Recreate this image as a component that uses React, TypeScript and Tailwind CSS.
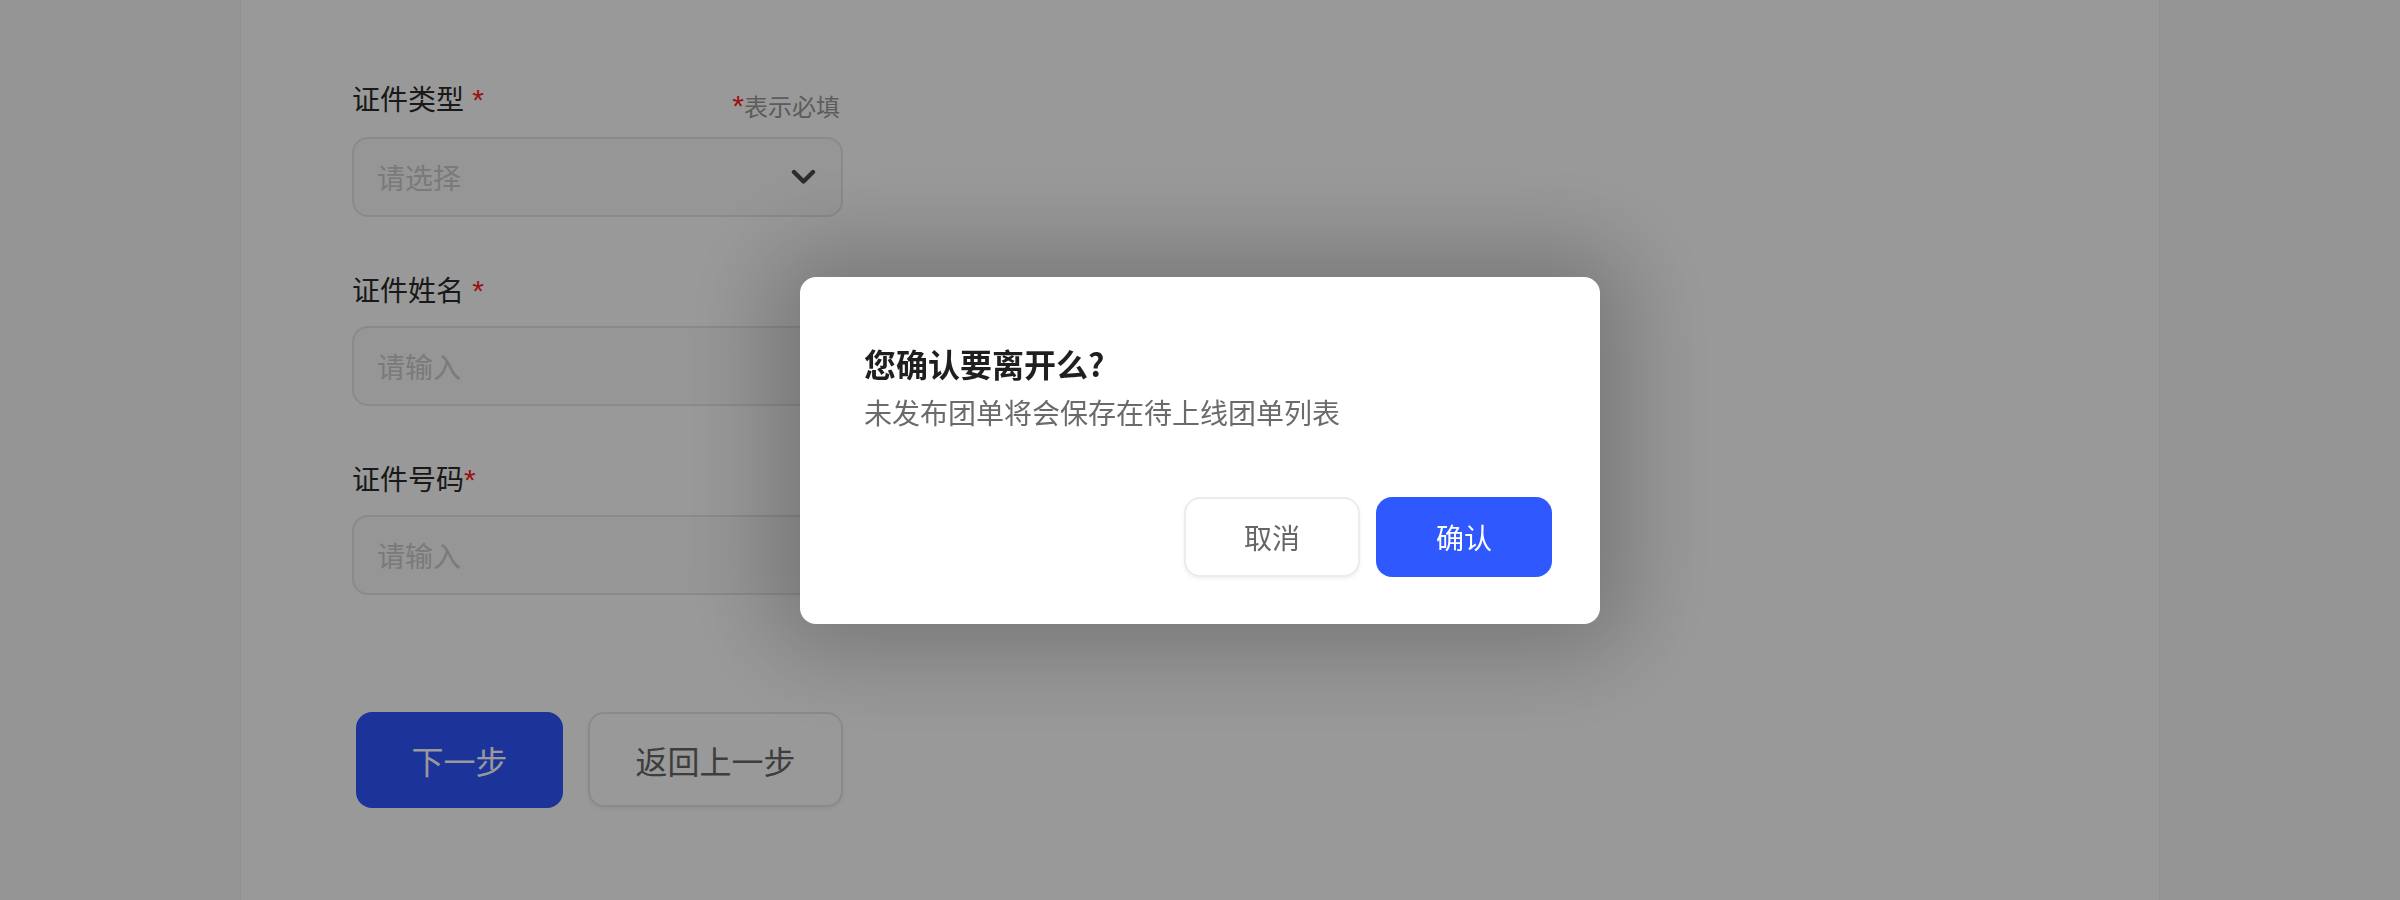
import { useState } from 'react';

const fields = [
  { label: '证件类型', star: ' *', kind: 'select', placeholder: '请选择' },
  { label: '证件姓名', star: ' *', kind: 'input', placeholder: '请输入' },
  { label: '证件号码', star: '*', kind: 'input', placeholder: '请输入' },
];

function ChevronDown() {
  return (
    <svg width="25" height="16" viewBox="0 0 25 16" fill="none">
      <polyline
        points="3,3 12.5,12.5 22,3"
        stroke="#4a4a4a"
        strokeWidth="4.4"
        strokeLinecap="round"
        strokeLinejoin="round"
      />
    </svg>
  );
}

function Star({ text }: { text: string }) {
  return (
    <span
      className="text-[30px] text-[#ff2020]"
      style={{ fontFamily: '"Liberation Sans", sans-serif' }}
    >
      {text}
    </span>
  );
}

export default function App() {
  const [open, setOpen] = useState(true);

  return (
    <div
      className="relative min-h-[900px] bg-[#f8f8f8]"
      style={{ fontFamily: '"Noto Sans CJK SC", "Noto Sans", sans-serif' }}
    >
      <div className="mx-auto min-h-[900px] w-[1920px] border-x border-[#f3f3f3] bg-white pl-[111px] pt-[78px]">
        <div className="flex flex-col gap-[52px]">
          {fields.map((f, i) => (
            <div key={f.label} className="flex flex-col gap-[15px]">
              <div className="flex w-[491px] items-start justify-between">
                <span className="text-[28px] leading-[40px] text-[#2b2b2b]">
                  {f.label}
                  <Star text={f.star} />
                </span>
                {i === 0 && (
                  <span className="pr-[3px] pt-[12px] text-[24px] leading-[32px] text-[#999]">
                    <Star text="*" />
                    表示必填
                  </span>
                )}
              </div>
              {f.kind === 'select' ? (
                <div className="flex h-[80px] w-[491px] items-center justify-between rounded-[16px] border-2 border-[#e6e6e6] bg-[#fafafa] pl-[23px] pr-[25px]">
                  <span className="text-[28px] text-[#cccccc]">{f.placeholder}</span>
                  <ChevronDown />
                </div>
              ) : (
                <input
                  className="h-[80px] w-[760px] rounded-[16px] border-2 border-[#e6e6e6] bg-[#fafafa] px-[23px] text-[28px] text-[#333] outline-none placeholder:text-[#cccccc]"
                  placeholder={f.placeholder}
                />
              )}
            </div>
          ))}
        </div>

        <div className="ml-[4px] mt-[117px] flex gap-[25px]">
          <button
            type="button"
            className="h-[96px] w-[207px] rounded-[16px] bg-[#2f55ff] text-[32px] text-white"
          >
            下一步
          </button>
          <button
            type="button"
            className="h-[95px] w-[255px] rounded-[16px] border-2 border-[#e6e6e6] bg-white text-[32px] text-[#666] shadow-[0_2px_4px_rgba(0,0,0,0.06)]"
          >
            返回上一步
          </button>
        </div>
      </div>

      {open && (
        <div className="fixed inset-0 flex items-center justify-center bg-black/40">
          <div className="w-[800px] rounded-[16px] bg-white pb-[47px] pl-[64px] pr-[48px] pt-[62px] shadow-[0_0_90px_30px_rgba(0,0,0,0.22)]">
            <div className="text-[32px] font-bold leading-[48px] text-[#1f1f1f]">
              您确认要离开么?
            </div>
            <div className="mt-[5px] text-[28px] leading-[40px] text-[#6b6b6b]">
              未发布团单将会保存在待上线团单列表
            </div>
            <div className="mt-[65px] flex justify-end gap-[16px]">
              <button
                type="button"
                onClick={() => setOpen(false)}
                className="h-[80px] w-[176px] rounded-[16px] border-2 border-[#ececec] bg-white text-[28px] text-[#666] shadow-[0_2px_4px_rgba(0,0,0,0.06)]"
              >
                取消
              </button>
              <button
                type="button"
                onClick={() => setOpen(false)}
                className="h-[80px] w-[176px] rounded-[16px] bg-[#3058ff] text-[28px] text-white"
              >
                确认
              </button>
            </div>
          </div>
        </div>
      )}
    </div>
  );
}
